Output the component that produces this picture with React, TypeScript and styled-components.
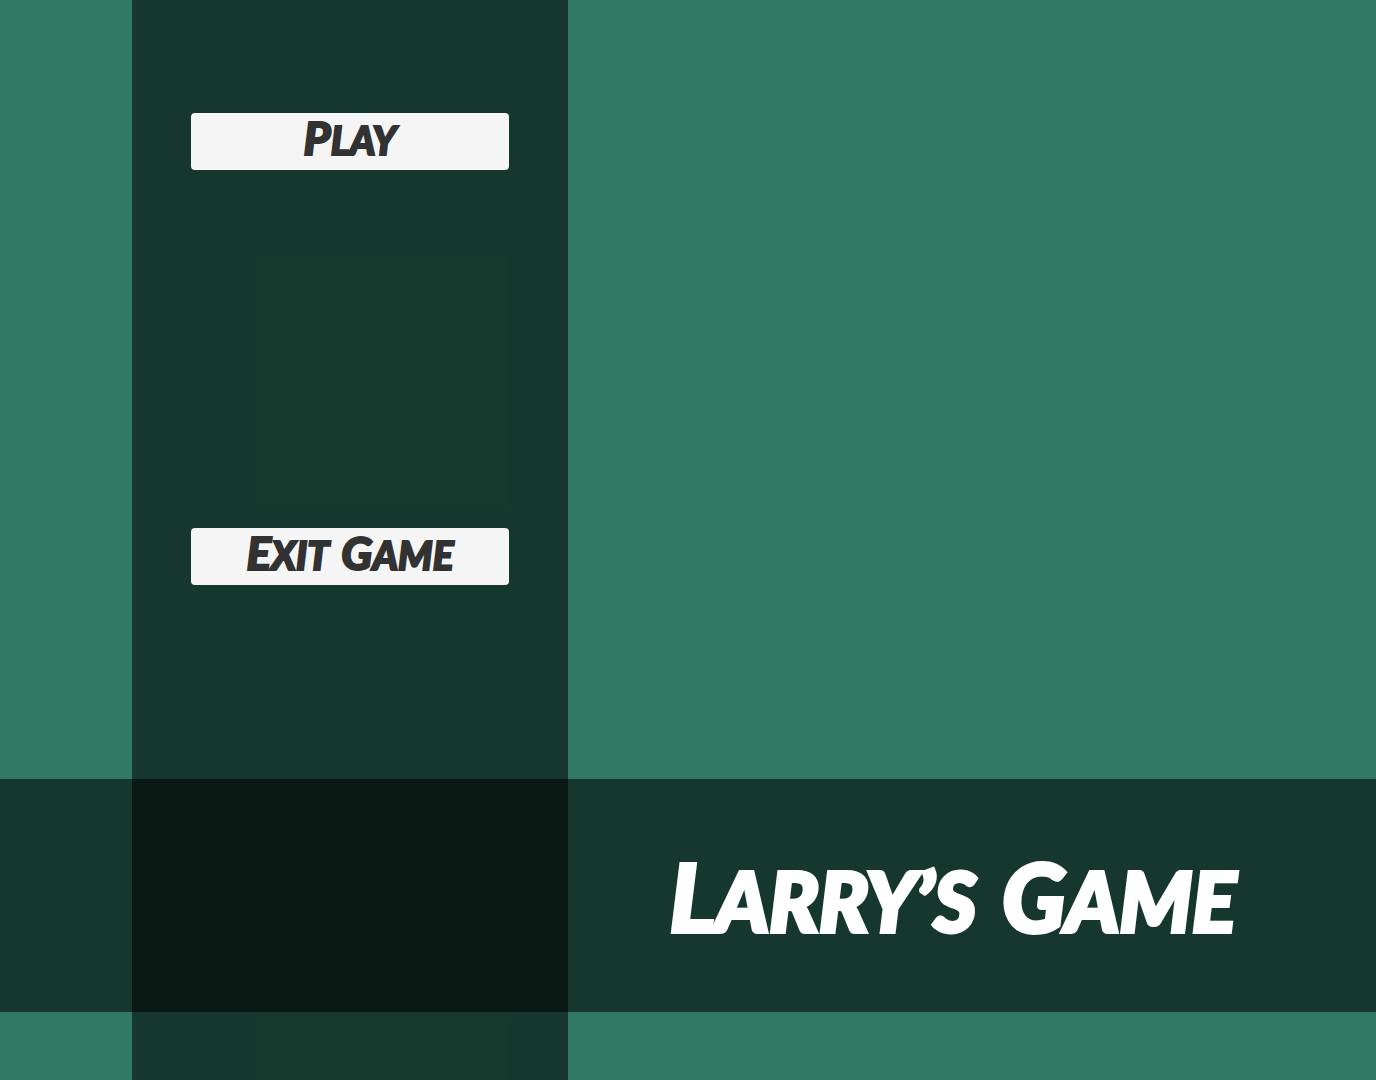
import React from "react";
import styled, { createGlobalStyle } from "styled-components";

const felt = "#317963";
const shade = "rgba(0, 0, 0, 0.54)";

const GlobalStyle = createGlobalStyle`
  *, *::before, *::after { box-sizing: border-box; }
  body { margin: 0; background: ${felt}; }
`;

const Screen = styled.main`
  display: grid;
  grid-template-columns: 132px 436px 1fr;
  grid-template-rows: 1fr 233px 68px;
  min-height: 100vh;
  background: ${felt};
  font-family: Lato, "Liberation Sans", sans-serif;
  font-weight: 900;
  font-style: italic;
`;

const Menu = styled.nav`
  grid-column: 2;
  grid-row: 1 / -1;
  display: flex;
  flex-direction: column;
  gap: 358px;
  padding: 113px 59px 0;
  background: ${shade};
`;

const Banner = styled.header`
  grid-column: 1 / -1;
  grid-row: 2;
  display: flex;
  align-items: center;
  justify-content: flex-end;
  padding: 4px 140px 0 0;
  background: ${shade};
`;

const Word = styled.span<{ $initial: number }>`
  display: inline-block;
  text-transform: uppercase;

  &::first-letter {
    font-size: ${(p) => p.$initial}px;
  }

  & + & {
    margin-left: 0.1em;
  }
`;

const Title = styled.h1`
  margin: 0;
  color: #ffffff;
  font-size: 82px;
  font-weight: 900;
  line-height: 104px;
  white-space: nowrap;
  -webkit-text-stroke: 4px #ffffff;
`;

const MenuButton = styled.button`
  height: 57px;
  padding: 0 0 6px;
  border: 0;
  border-radius: 4px;
  background: #f5f5f5;
  color: #323232;
  font: inherit;
  font-size: 39px;
  line-height: 48px;
  white-space: nowrap;
  -webkit-text-stroke: 2px #323232;
  cursor: pointer;

  &:hover { background: #ffffff; }
  &:active { background: #c8c8c8; }
`;

function Lettering({ text, initial }: { text: string; initial: number }) {
  return (
    <>
      {text.split(" ").map((word, i) => (
        <React.Fragment key={word}>
          {i > 0 && " "}
          <Word $initial={initial}>{word}</Word>
        </React.Fragment>
      ))}
    </>
  );
}

export default function App() {
  return (
    <>
      <GlobalStyle />
      <Screen>
        <Menu aria-label="Main menu">
          <MenuButton type="button">
            <Lettering text="Play" initial={46} />
          </MenuButton>
          <MenuButton type="button">
            <Lettering text="Exit Game" initial={46} />
          </MenuButton>
        </Menu>
        <Banner>
          <Title>
            <Lettering text="Larry’s Game" initial={94} />
          </Title>
        </Banner>
      </Screen>
    </>
  );
}
